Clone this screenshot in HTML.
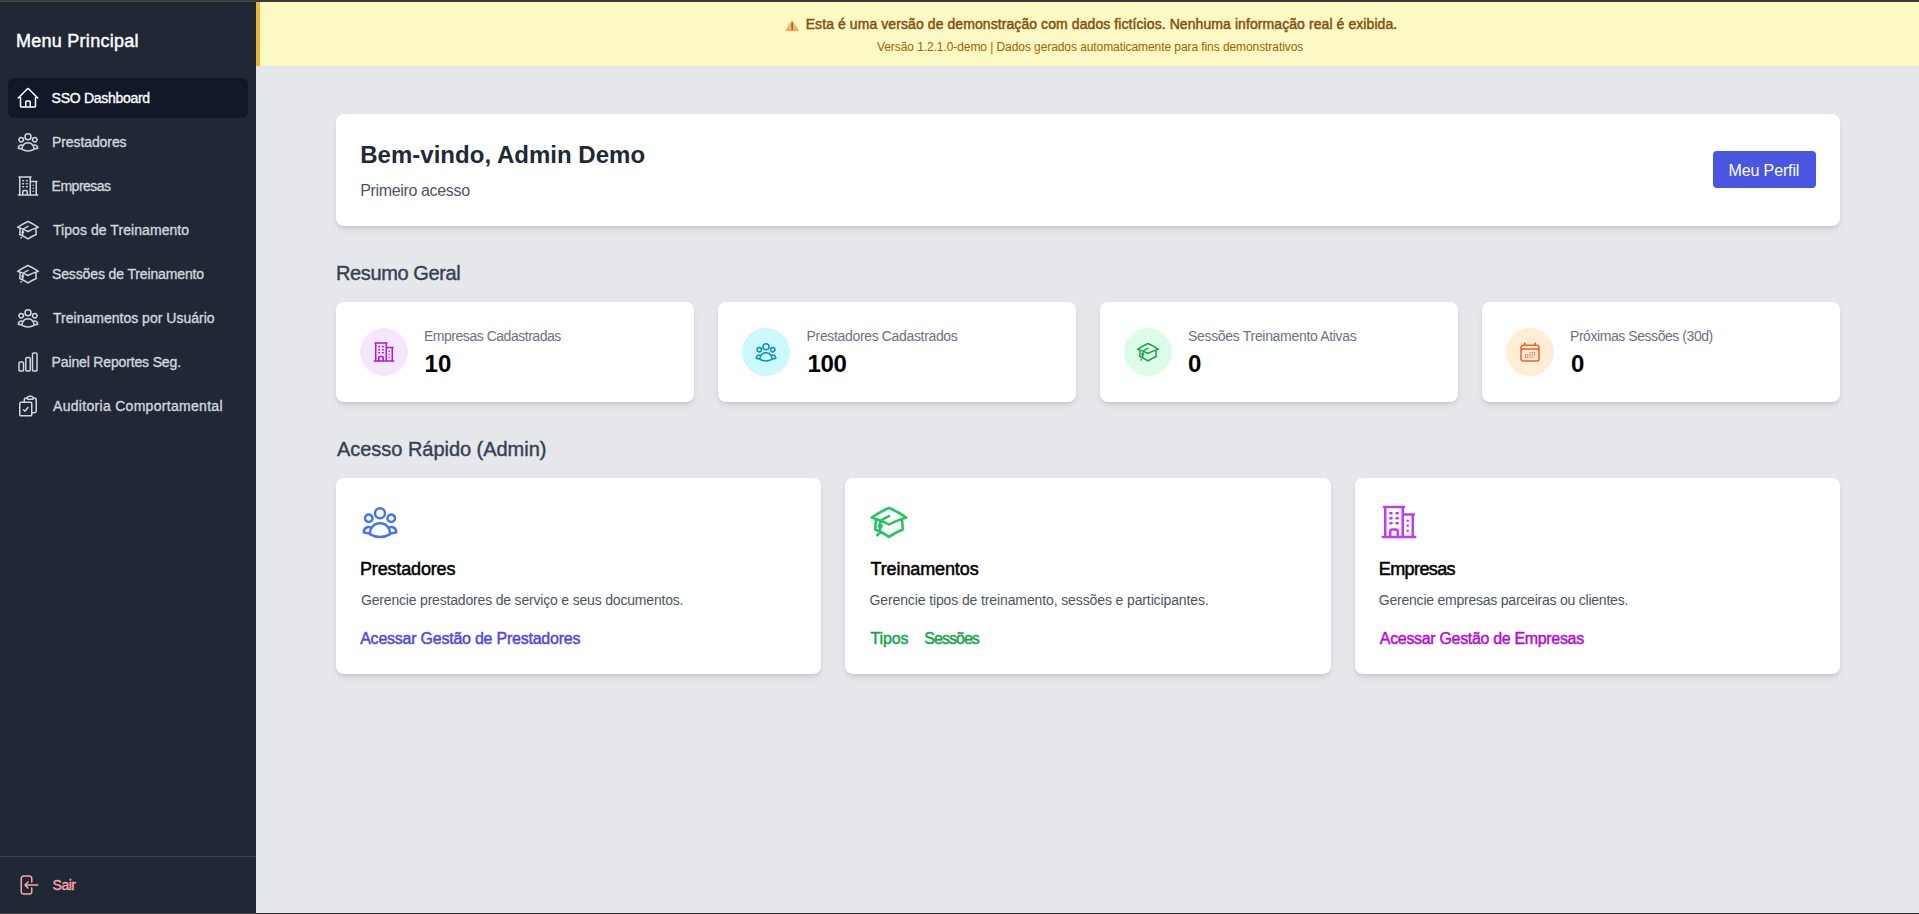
<!DOCTYPE html>
<html lang="pt-BR">
<head>
<meta charset="utf-8">
<title>SSO Dashboard</title>
<style>
*{box-sizing:border-box;margin:0;padding:0}
html,body{width:1919px;height:914px;overflow:hidden}
body{font-family:"Liberation Sans",sans-serif;background:#e5e7eb;position:relative;color:#111827}
svg{display:block}
.topbar{position:absolute;left:0;top:0;width:1919px;height:2px;z-index:10;background:linear-gradient(#3b3b3b 0,#3b3b3b 1px,transparent 1px),linear-gradient(90deg,#474845 0,#474845 256px,#393939 256px)}
.botbar{position:absolute;left:0;top:913px;width:1919px;height:1px;z-index:10;background:linear-gradient(90deg,#444442 0,#444442 256px,#2e2e2e 256px)}
/* sidebar */
.sidebar{position:absolute;left:0;top:0;width:256px;height:914px;background:#202836;color:#d1d5db}
.sidebar h2{position:absolute;left:16px;top:27px;font-size:18px;line-height:28px;font-weight:400;-webkit-text-stroke:.45px #fff;color:#fff;white-space:nowrap}
.nav{position:absolute;left:8px;top:78px;width:240px}
.nav a{display:flex;align-items:center;height:40px;margin-bottom:4px;padding:0 8px;border-radius:6px;color:#d1d5db;font-size:14px;font-weight:400;-webkit-text-stroke:.35px currentColor;text-decoration:none;white-space:nowrap}
.nav a.active{background:#111827;color:#fff}
.nav a svg{width:24px;height:24px;margin-right:12px;flex:none;color:#d1d5db}
.nav a.active svg{color:#fff}
.logout{position:absolute;left:0;top:856px;width:256px;height:58px;border-top:1px solid #374151}
.logout a{position:absolute;left:8px;top:8px;width:240px;height:40px;display:flex;align-items:center;padding:0 8px;color:#fca5a5;font-size:14px;font-weight:400;-webkit-text-stroke:.35px currentColor;text-decoration:none;white-space:nowrap}
.logout svg{width:24px;height:24px;margin-right:12px;color:#fca5a5}
/* main */
.banner{position:absolute;left:256px;top:2px;width:1663px;height:64px;background:#fcf9c5;border-left:4px solid #ebb53c;text-align:center}
.banner .l1{position:absolute;left:0;right:0;top:12px;font-size:14px;line-height:20px;font-weight:400;-webkit-text-stroke:.45px currentColor;color:#854d0e;white-space:nowrap;display:flex;justify-content:center;align-items:center}
.banner .warn{position:absolute;left:525px;top:16.9px;width:14.2px;height:12.2px}
.banner .l2{position:absolute;left:0;right:0;top:37px;font-size:12px;line-height:16px;color:#a16207;white-space:nowrap}
.card{position:absolute;background:#fff;border-radius:8px;box-shadow:0 4px 6px -1px rgba(0,0,0,.1),0 2px 4px -2px rgba(0,0,0,.1)}
.welcome{left:336px;top:114px;width:1504px;height:112px}
.welcome h1{position:absolute;left:24px;top:25px;font-size:24px;line-height:32px;font-weight:700;color:#1f2937;white-space:nowrap}
.welcome p{position:absolute;left:24px;top:65px;font-size:16px;line-height:24px;color:#4b5563;white-space:nowrap}
.btn{position:absolute;left:1377px;top:37px;width:103px;height:37px;border-radius:4px;background:#4956e2;color:#fff;font-size:16px;line-height:39px;text-align:center;white-space:nowrap}
h3.sec{position:absolute;left:336px;font-size:20px;line-height:28px;font-weight:400;-webkit-text-stroke:.4px currentColor;color:#374151;white-space:nowrap}
.stat{top:302px;width:358px;height:100px}
.stat .circ{position:absolute;left:24px;top:26px;width:48px;height:48px;border-radius:50%;display:flex;align-items:center;justify-content:center}
.stat .circ svg{width:24px;height:24px}
.stat .lbl{position:absolute;left:88px;top:24px;font-size:14px;line-height:20px;color:#6b7280;white-space:nowrap}
.stat .num{position:absolute;left:88px;top:46px;font-size:24px;line-height:32px;font-weight:700;color:#000;white-space:nowrap}
.quick{top:478px;width:485.33px;height:196px}
.quick svg{position:absolute;left:24px;top:24px;width:40px;height:40px}
.quick h4{position:absolute;left:24px;top:76.5px;font-size:18px;line-height:28px;font-weight:400;-webkit-text-stroke:.5px currentColor;color:#000;white-space:nowrap}
.quick p{position:absolute;left:24px;top:112px;font-size:14px;line-height:20px;color:#4b5563;white-space:nowrap}
.quick .lnk{position:absolute;left:24px;top:149px;font-size:16px;line-height:24px;font-weight:400;-webkit-text-stroke:.45px currentColor;white-space:nowrap}
.quick .lnk span+span{margin-left:16px}
/*AUTO*/
#menu{letter-spacing:0.263px;position:relative;left:0.00px}
#n0{letter-spacing:-0.293px;position:relative;left:-0.40px}
#n1{letter-spacing:-0.090px;position:relative;left:0.00px}
#n2{letter-spacing:-0.501px;position:relative;left:-0.40px}
#n3{letter-spacing:0.062px;position:relative;left:1.00px}
#n4{letter-spacing:-0.129px;position:relative;left:0.00px}
#n5{letter-spacing:0.012px;position:relative;left:1.00px}
#n6{letter-spacing:-0.152px;position:relative;left:-0.40px}
#n7{letter-spacing:0.301px;position:relative;left:1.00px}
#nsair{letter-spacing:-0.540px;position:relative;left:0.60px}
#b1{letter-spacing:0.081px;position:relative;left:12.00px}
#b2{letter-spacing:-0.077px;position:relative;left:0.60px}
#w1{letter-spacing:0.022px;position:relative;left:0.20px}
#w2{letter-spacing:-0.347px;position:relative;left:0.20px}
#btn{letter-spacing:-0.120px;position:relative;left:-0.60px}
#h1{letter-spacing:-0.389px;position:relative;left:0.00px}
#h2{letter-spacing:-0.034px;position:relative;left:1.00px}
#sl0{letter-spacing:-0.474px;position:relative;left:0.00px}
#sl1{letter-spacing:-0.344px;position:relative;left:0.60px}
#sl2{letter-spacing:-0.315px;position:relative;left:0.00px}
#sl3{letter-spacing:-0.441px;position:relative;left:0.00px}
#sn0{letter-spacing:0.180px;position:relative;left:0.40px}
#sn1{letter-spacing:-0.270px;position:relative;left:1.40px}
#sn2{letter-spacing:0.000px;position:relative;left:0.00px}
#sn3{letter-spacing:0.000px;position:relative;left:1.00px}
#qh0{letter-spacing:-0.162px;position:relative;left:0.00px}
#qh1{letter-spacing:-0.115px;position:relative;left:1.20px}
#qh2{letter-spacing:-0.617px;position:relative;left:0.20px}
#qp0{letter-spacing:-0.184px;position:relative;left:1.00px}
#qp1{letter-spacing:-0.117px;position:relative;left:0.20px}
#qp2{letter-spacing:-0.228px;position:relative;left:0.20px}
#ql0{letter-spacing:-0.235px;position:relative;left:0.20px}
#ql1a{letter-spacing:-0.113px;position:relative;left:1.20px}
#ql1b{letter-spacing:-0.975px;position:relative;left:1.00px}
#ql2{letter-spacing:-0.328px;position:relative;left:1.20px}
/*ENDAUTO*/
</style>
</head>
<body>
<svg width="0" height="0" style="position:absolute">
<defs>
<symbol id="i-home" viewBox="0 0 24 24"><path fill="none" stroke="currentColor" stroke-width="1.5" stroke-linecap="round" stroke-linejoin="round" d="M2.25 12l8.954-8.955c.44-.439 1.152-.439 1.591 0L21.75 12M4.5 9.75v10.125c0 .621.504 1.125 1.125 1.125H9.75v-4.875c0-.621.504-1.125 1.125-1.125h2.25c.621 0 1.125.504 1.125 1.125V21h4.125c.621 0 1.125-.504 1.125-1.125V9.75M8.25 21h8.25"/></symbol>
<symbol id="i-users" viewBox="0 0 24 24"><path fill="none" stroke="currentColor" stroke-width="1.5" stroke-linecap="round" stroke-linejoin="round" d="M18 18.72a9.094 9.094 0 003.741-.479 3 3 0 00-4.682-2.72m.94 3.198l.001.031c0 .225-.012.447-.037.666A11.944 11.944 0 0112 21c-2.17 0-4.207-.576-5.963-1.584A6.062 6.062 0 016 18.719m12 0a5.971 5.971 0 00-.941-3.197m0 0A5.995 5.995 0 0012 12.75a5.995 5.995 0 00-5.058 2.772m0 0a3 3 0 00-4.681 2.72 8.986 8.986 0 003.74.477m.94-3.197a5.971 5.971 0 00-.94 3.197M15 6.75a3 3 0 11-6 0 3 3 0 016 0zm6 3a2.25 2.25 0 11-4.5 0 2.25 2.25 0 014.5 0zm-13.5 0a2.25 2.25 0 11-4.5 0 2.25 2.25 0 014.5 0z"/></symbol>
<symbol id="i-build" viewBox="0 0 24 24"><path fill="none" stroke="currentColor" stroke-width="1.5" stroke-linecap="round" stroke-linejoin="round" d="M2.25 21h19.5m-18-18v18m10.5-18v18m6-13.5V21M6.75 6.75h.75m-.75 3h.75m-.75 3h.75m3-6h.75m-.75 3h.75m-.75 3h.75M6.75 21v-3.375c0-.621.504-1.125 1.125-1.125h2.25c.621 0 1.125.504 1.125 1.125V21M3 3h12m-.75 4.500H21m-3.750 3.750h.008v.008h-.008v-.008zm0 3h.008v.008h-.008v-.008zm0 3h.008v.008h-.008v-.008z"/></symbol>
<symbol id="i-cap" viewBox="0 0 24 24"><path fill="none" stroke="currentColor" stroke-width="1.5" stroke-linecap="round" stroke-linejoin="round" d="M4.26 10.147a60.436 60.436 0 00-.491 6.347A48.627 48.627 0 0112 20.904a48.627 48.627 0 018.232-4.41 60.46 60.46 0 00-.491-6.347m-15.482 0a50.570 50.570 0 00-2.658-.813A59.905 59.905 0 0112 3.493a59.902 59.902 0 0110.399 5.840c-.896.248-1.783.520-2.658.814m-15.482 0A50.697 50.697 0 0112 13.489a50.702 50.702 0 017.740-3.342M6.750 15a.75.75 0 100-1.500.75.75 0 000 1.500zm0 0v-3.675A55.378 55.378 0 0112 8.443m-7.007 11.550A5.981 5.981 0 006.750 15.750v-1.500"/></symbol>
<symbol id="i-chart" viewBox="0 0 24 24"><path fill="none" stroke="currentColor" stroke-width="1.5" stroke-linecap="round" stroke-linejoin="round" d="M3 13.125C3 12.504 3.504 12 4.125 12h2.250c.621 0 1.125.504 1.125 1.125v6.750C7.500 20.496 6.996 21 6.375 21h-2.250A1.125 1.125 0 013 19.875v-6.750zM9.750 8.625c0-.621.504-1.125 1.125-1.125h2.250c.621 0 1.125.504 1.125 1.125v11.250c0 .621-.504 1.125-1.125 1.125h-2.250a1.125 1.125 0 01-1.125-1.125V8.625zM16.500 4.125c0-.621.504-1.125 1.125-1.125h2.250C20.496 3 21 3.504 21 4.125v15.750c0 .621-.504 1.125-1.125 1.125h-2.250a1.125 1.125 0 01-1.125-1.125V4.125z"/></symbol>
<symbol id="i-clip" viewBox="0 0 24 24"><path fill="none" stroke="currentColor" stroke-width="1.5" stroke-linecap="round" stroke-linejoin="round" d="M11.350 3.836c-.065.210-.1.433-.1.664 0 .414.336.750.750.750h4.500a.75.75 0 00.750-.750 2.250 2.250 0 00-.1-.664m-5.800 0A2.251 2.251 0 0113.500 2.250H15c1.012 0 1.867.668 2.150 1.586m-5.800 0c-.376.023-.750.050-1.124.080C9.095 4.010 8.250 4.973 8.250 6.108V8.250m8.900-4.414c.376.023.750.050 1.124.080 1.131.094 1.976 1.057 1.976 2.192V16.500A2.250 2.250 0 0118 18.750h-2.250m-7.500-10.500H4.875c-.621 0-1.125.504-1.125 1.125v11.250c0 .621.504 1.125 1.125 1.125h9.750c.621 0 1.125-.504 1.125-1.125V18.750m-7.500-10.500h6.375c.621 0 1.125.504 1.125 1.125v9.375m-8.250-3l1.500 1.500 3-3.750"/></symbol>
<symbol id="i-out" viewBox="0 0 24 24"><path fill="none" stroke="currentColor" stroke-width="1.5" stroke-linecap="round" stroke-linejoin="round" d="M15.750 9V5.250A2.250 2.250 0 0013.500 3h-6a2.250 2.250 0 00-2.250 2.250v13.500A2.250 2.250 0 007.500 21h6a2.250 2.250 0 002.250-2.250V15M12 9l-3 3m0 0l3 3m-3-3h12.750"/></symbol>
<symbol id="i-cal" viewBox="0 0 24 24"><path fill="none" stroke="currentColor" stroke-width="1.5" stroke-linecap="round" stroke-linejoin="round" d="M6.750 3v2.250M17.250 3v2.250M3 18.750V7.500a2.250 2.250 0 012.250-2.250h13.500A2.250 2.250 0 0121 7.500v11.250m-18 0A2.250 2.250 0 005.250 21h13.500A2.250 2.250 0 0021 18.750m-18 0v-7.500A2.250 2.250 0 015.250 9h13.500A2.250 2.250 0 0121 11.250v7.500m-9-6h.008v.008H12v-.008zM12 15h.008v.008H12V15zm0 2.250h.008v.008H12v-.008zM9.750 15h.008v.008H9.750V15zm0 2.250h.008v.008H9.750v-.008zM7.500 15h.008v.008H7.500V15zm0 2.250h.008v.008H7.500v-.008zm6.750-4.500h.008v.008h-.008v-.008zm0 2.250h.008v.008h-.008V15zm0 2.250h.008v.008h-.008v-.008zm2.250-4.500h.008v.008H16.500v-.008zm0 2.250h.008v.008H16.500V15z"/></symbol>
</defs>
</svg>

<div class="sidebar">
  <h2><span id="menu">Menu Principal</span></h2>
  <div class="nav">
    <a class="active"><svg><use href="#i-home"/></svg><span id="n0">SSO Dashboard</span></a>
    <a><svg><use href="#i-users"/></svg><span id="n1">Prestadores</span></a>
    <a><svg><use href="#i-build"/></svg><span id="n2">Empresas</span></a>
    <a><svg><use href="#i-cap"/></svg><span id="n3">Tipos de Treinamento</span></a>
    <a><svg><use href="#i-cap"/></svg><span id="n4">Sessões de Treinamento</span></a>
    <a><svg><use href="#i-users"/></svg><span id="n5">Treinamentos por Usuário</span></a>
    <a><svg><use href="#i-chart"/></svg><span id="n6">Painel Reportes Seg.</span></a>
    <a><svg><use href="#i-clip"/></svg><span id="n7">Auditoria Comportamental</span></a>
  </div>
  <div class="logout"><a><svg><use href="#i-out"/></svg><span id="nsair">Sair</span></a></div>
</div>

<div class="banner">
  <svg class="warn" viewBox="0 0 14.2 12.2"><defs><linearGradient id="wg" x1="0" y1="0" x2="0" y2="1"><stop offset="0" stop-color="#ffd768"/><stop offset="1" stop-color="#ffa257"/></linearGradient></defs><path d="M7.1 .1 14.15 12.1H.05z" fill="url(#wg)"/><rect x="6.55" y="3.2" width="1.15" height="6" rx=".4" fill="#3b3655"/><rect x="6.5" y="9.85" width="1.25" height="1.25" rx=".5" fill="#3b3655"/></svg><div class="l1"><span id="b1">Esta é uma versão de demonstração com dados fictícios. Nenhuma informação real é exibida.</span></div>
  <div class="l2"><span id="b2">Versão 1.2.1.0-demo | Dados gerados automaticamente para fins demonstrativos</span></div>
</div>

<div class="card welcome">
  <h1><span id="w1">Bem-vindo, Admin Demo</span></h1>
  <p><span id="w2">Primeiro acesso</span></p>
  <div class="btn"><span id="btn">Meu Perfil</span></div>
</div>

<h3 class="sec" style="top:259px"><span id="h1">Resumo Geral</span></h3>

<div class="card stat" style="left:336px"><div class="circ" style="background:#f5e7fe;color:#b414e2"><svg><use href="#i-build"/></svg></div><div class="lbl"><span id="sl0">Empresas Cadastradas</span></div><div class="num"><span id="sn0">10</span></div></div>
<div class="card stat" style="left:718px"><div class="circ" style="background:#ccf9fd;color:#0891b2"><svg><use href="#i-users"/></svg></div><div class="lbl"><span id="sl1">Prestadores Cadastrados</span></div><div class="num"><span id="sn1">100</span></div></div>
<div class="card stat" style="left:1100px"><div class="circ" style="background:#dcfce7;color:#16a34a"><svg><use href="#i-cap"/></svg></div><div class="lbl"><span id="sl2">Sessões Treinamento Ativas</span></div><div class="num"><span id="sn2">0</span></div></div>
<div class="card stat" style="left:1482px"><div class="circ" style="background:#ffedd5;color:#f1602a"><svg><use href="#i-cal"/></svg></div><div class="lbl"><span id="sl3">Próximas Sessões (30d)</span></div><div class="num"><span id="sn3">0</span></div></div>

<h3 class="sec" style="top:435px"><span id="h2">Acesso Rápido (Admin)</span></h3>

<div class="card quick" style="left:336px"><svg style="color:#4873ec"><use href="#i-users"/></svg><h4><span id="qh0">Prestadores</span></h4><p><span id="qp0">Gerencie prestadores de serviço e seus documentos.</span></p><div class="lnk" style="color:#4f46e5"><span id="ql0">Acessar Gestão de Prestadores</span></div></div>
<div class="card quick" style="left:845.33px"><svg style="color:#22c55e"><use href="#i-cap"/></svg><h4><span id="qh1">Treinamentos</span></h4><p><span id="qp1">Gerencie tipos de treinamento, sessões e participantes.</span></p><div class="lnk" style="color:#16a34a"><span id="ql1a">Tipos</span><span id="ql1b">Sessões</span></div></div>
<div class="card quick" style="left:1354.67px"><svg style="color:#c13cf0"><use href="#i-build"/></svg><h4><span id="qh2">Empresas</span></h4><p><span id="qp2">Gerencie empresas parceiras ou clientes.</span></p><div class="lnk" style="color:#b30ad9"><span id="ql2">Acessar Gestão de Empresas</span></div></div>

<div class="topbar"></div>
<div class="botbar"></div>
</body>
</html>
